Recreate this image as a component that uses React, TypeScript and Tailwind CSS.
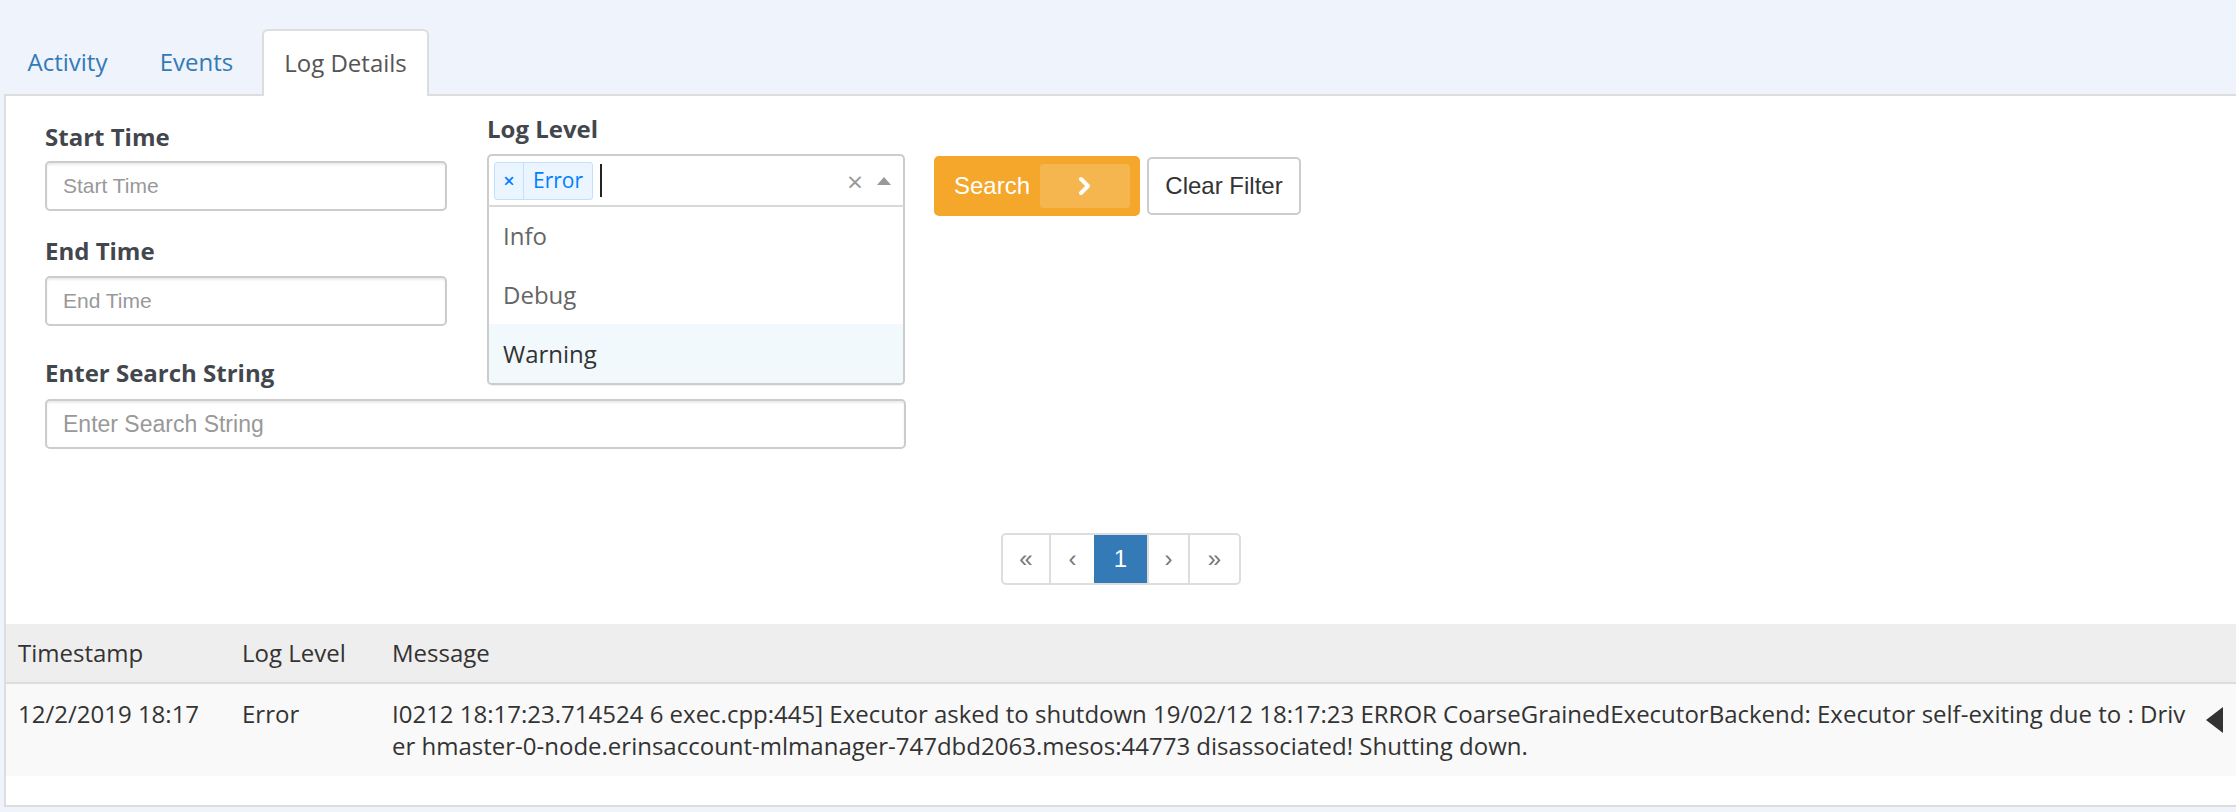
export default function App() {
  const sans = "font-['Liberation_Sans',Arial,sans-serif]";

  return (
    <div className="min-h-screen bg-[#eef3fc] font-['Open_Sans',sans-serif] text-[#333]">
      <div className="pl-1">
        {/* tabs */}
        <div className="flex items-end gap-[3px] h-[96px] border-b-2 border-[#ddd]">
          <div className="w-[127px] h-[65px] flex items-center justify-center text-[24px] text-[#337ab7]">
            Activity
          </div>
          <div className="w-[125px] h-[65px] flex items-center justify-center text-[24px] text-[#337ab7]">
            Events
          </div>
          <div className="w-[167px] h-[67px] -mb-[2px] pb-[2px] flex items-center justify-center text-[24px] text-[#555] bg-white border-2 border-b-0 border-[#ddd] rounded-t-[6px]">
            Log Details
          </div>
        </div>

        {/* tab content */}
        <div className="bg-white border-l-2 border-b-2 border-[#ddd] h-[711px]">
          <div className="flex items-start pl-[39px]">
            {/* times */}
            <div className="w-[402px] pt-[24px]">
              <div className="text-[24px] leading-[34px] font-bold text-[#43474d] mb-[7px]">Start Time</div>
              <input
                placeholder="Start Time"
                className={`${sans} w-full h-[50px] border-2 border-[#ccc] rounded-[5px] pl-[16px] text-[21px] placeholder:text-[#999] shadow-[inset_0_2px_2px_rgba(0,0,0,0.075)]`}
              />
              <div className="text-[24px] leading-[34px] font-bold text-[#43474d] mt-[23px] mb-[8px]">End Time</div>
              <input
                placeholder="End Time"
                className={`${sans} w-full h-[50px] border-2 border-[#ccc] rounded-[5px] pl-[16px] text-[21px] placeholder:text-[#999] shadow-[inset_0_2px_2px_rgba(0,0,0,0.075)]`}
              />
            </div>

            {/* log level select */}
            <div className="w-[418px] ml-[40px] pt-[16px]">
              <div className="text-[24px] leading-[34px] font-bold text-[#43474d] mb-[8px]">Log Level</div>
              <div className="relative">
                <div className="h-[53px] border-2 border-[#ccc] border-b-[#d9d9d9] rounded-t-[5px] flex items-center pl-[5px] pr-[12px]">
                  <div className="flex h-[38px] border border-[#c2e0ff] bg-[#ebf5ff] rounded-[3px] text-[#007eff]">
                    <span className="w-[29px] flex items-center justify-center border-r border-[#c2e0ff] text-[20px] font-semibold">×</span>
                    <span className="px-[9px] flex items-center text-[21px]">Error</span>
                  </div>
                  <div className="ml-[7px] w-[2px] h-[33px] bg-[#222]" />
                  <div className="flex-1" />
                  <span className="text-[#999] text-[28px] leading-none mr-[14px]">×</span>
                  <span className="w-0 h-0 border-x-[7px] border-x-transparent border-b-[8px] border-b-[#999]" />
                </div>
                <div className="absolute left-0 right-0 top-[53px] z-10 bg-white border-2 border-t-0 border-[#ccc] rounded-b-[5px] shadow-[0_1px_0_rgba(0,0,0,0.06)] overflow-hidden">
                  <div className="h-[58px] flex items-center pl-[14px] text-[24px] text-[#666]">Info</div>
                  <div className="h-[59px] flex items-center pl-[14px] text-[24px] text-[#666]">Debug</div>
                  <div className="h-[59px] flex items-center pl-[14px] text-[24px] text-[#333] bg-[#f2f9fc]">Warning</div>
                </div>
              </div>
            </div>

            {/* buttons */}
            <div className={`${sans} flex items-center gap-[7px] ml-[29px] pt-[60px]`}>
              <button className="h-[60px] w-[206px] bg-[#f5a72b] rounded-[5px] flex items-center pl-[20px] pr-[10px] text-white text-[24px]">
                <span>Search</span>
                <span className="ml-auto w-[90px] h-[44px] bg-[#f5b650] rounded-[4px] flex items-center justify-center">
                  <svg width="16" height="20" viewBox="0 0 16 20">
                    <path d="M4 3 L11 10 L4 17" fill="none" stroke="white" strokeWidth="4" strokeLinecap="round" strokeLinejoin="round" />
                  </svg>
                </span>
              </button>
              <button className="h-[58px] w-[154px] bg-white border-2 border-[#ccc] rounded-[5px] text-[24px] text-[#333]">
                Clear Filter
              </button>
            </div>
          </div>

          {/* search string */}
          <div className="pl-[39px] mt-[30px] w-[900px]">
            <div className="text-[24px] leading-[34px] font-bold text-[#43474d] mb-[9px]">Enter Search String</div>
            <input
              placeholder="Enter Search String"
              className={`${sans} w-full h-[50px] border-2 border-[#ccc] rounded-[5px] pl-[16px] text-[23px] placeholder:text-[#999] shadow-[inset_0_2px_2px_rgba(0,0,0,0.075)]`}
            />
          </div>

          {/* pagination */}
          <div className="mt-[84px] flex justify-center">
            <div className={`${sans} flex h-[52px] border-2 border-[#ddd] rounded-[5px] overflow-hidden text-[24px] text-[#777]`}>
              <span className="w-[48px] flex items-center justify-center border-r-2 border-[#ddd]">«</span>
              <span className="w-[43px] flex items-center justify-center">‹</span>
              <span className="w-[53px] flex items-center justify-center bg-[#337ab7] text-white">1</span>
              <span className="w-[43px] flex items-center justify-center border-r-2 border-l-2 border-[#ddd]">›</span>
              <span className="w-[49px] flex items-center justify-center">»</span>
            </div>
          </div>

          {/* log table */}
          <table className="mt-[39px] w-full table-fixed border-collapse text-[24px] text-[#333]">
            <colgroup>
              <col className="w-[224px]" />
              <col className="w-[150px]" />
              <col />
              <col className="w-[41px]" />
            </colgroup>
            <thead>
              <tr className="bg-[#eee] border-b-2 border-[#ddd]">
                <th className="text-left font-normal px-[12px] py-[12px] leading-[34px]">Timestamp</th>
                <th className="text-left font-normal px-[12px] py-[12px] leading-[34px]">Log Level</th>
                <th className="text-left font-normal px-[12px] py-[12px] leading-[34px]">Message</th>
                <th />
              </tr>
            </thead>
            <tbody>
              <tr className="bg-[#f9f9f9] align-top">
                <td className="px-[12px] py-[14px] leading-[32px] whitespace-nowrap">12/2/2019 18:17</td>
                <td className="px-[12px] py-[14px] leading-[32px]">Error</td>
                <td className="pl-[12px] py-[14px] leading-[32px] whitespace-nowrap">
                  I0212 18:17:23.714524 6 exec.cpp:445] Executor asked to shutdown 19/02/12 18:17:23 ERROR CoarseGrainedExecutorBackend: Executor self-exiting due to : Driv
                  <br />
                  er hmaster-0-node.erinsaccount-mlmanager-747dbd2063.mesos:44773 disassociated! Shutting down.
                </td>
                <td className="py-[14px]">
                  <div className="mt-[9px] ml-[11px] w-0 h-0 border-y-[13px] border-y-transparent border-r-[17px] border-r-[#333]" />
                </td>
              </tr>
            </tbody>
          </table>
        </div>
      </div>
    </div>
  );
}
